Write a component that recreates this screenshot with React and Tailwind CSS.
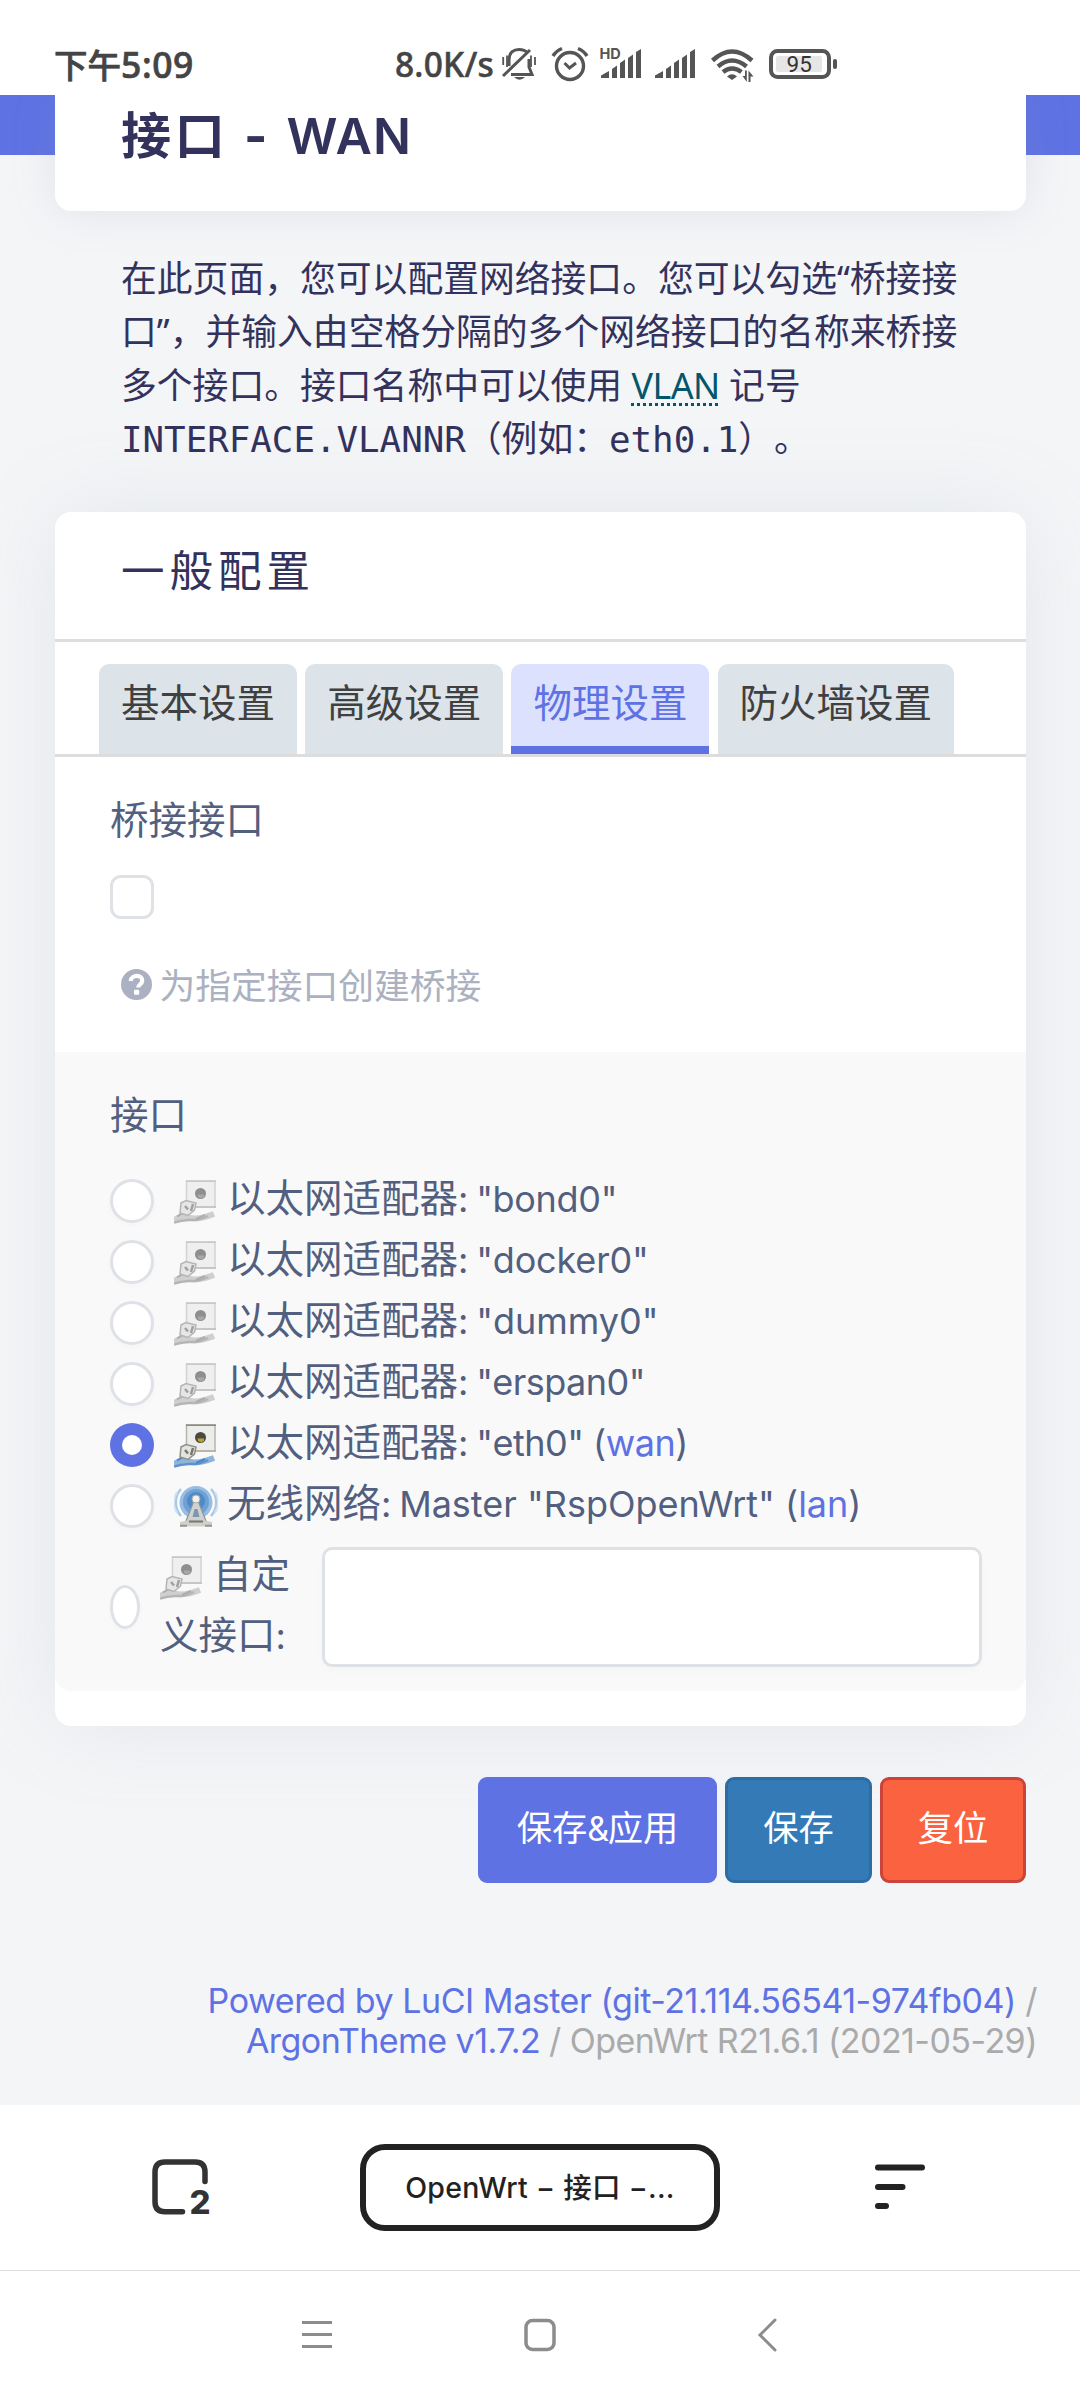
import React from "react";

const F = "font-['Inter','Noto_Sans_CJK_SC',sans-serif]";

function StatusBar() {
  return (
    <div className="relative z-10 h-[95px] w-full bg-white text-[#444444] flex items-start">
      <div className="ml-[54px] mt-[43px] w-[341px] h-[42px] leading-[42px] whitespace-nowrap font-medium text-[33.5px] [-webkit-text-stroke:0.7px] font-['Noto_Sans','Noto_Sans_CJK_SC',sans-serif]">
        下午<span className="text-[35.5px] tracking-[0.6px]">5:09</span>
      </div>
      <div className="mt-[43px] w-[105px] h-[42px] leading-[42px] whitespace-nowrap font-medium text-[33.5px] tracking-[0.2px] [-webkit-text-stroke:0.5px] font-['Noto_Sans',sans-serif]">8.0K/s</div>
      <svg className="mt-[40px]" width="340" height="50" viewBox="500 40 340 50" fill="none" stroke="#555" strokeWidth="3" strokeLinecap="butt">
        <path d="M530 50 L503 76" />
        <path d="M509 66 V60 C509 52 514 49.5 519 49.5 C523 49.5 526 51 528 53" />
        <path d="M529 59 V67 L532 74.5 H511" />
        <path d="M514 77 H525 Q519.5 82.500 514 77Z" fill="#555" stroke="none" />
        <path d="M503.200 57 V65 M507 55.500 V67 M531 55.500 V67 M535 57 V65" strokeWidth="1.800" />
        <circle cx="570" cy="66" r="13.500" strokeWidth="3.400" />
        <path d="M564.500 63 L569.500 68 L576 63" />
        <path d="M553 56 Q556 51 562 48.500 M578 48.500 Q584 51 587 56" strokeWidth="3.500" />
        <g fill="#555" stroke="none">
          {[601, 655].map((x) => (
            <g key={x}>
              <path d={`M${x} 78 V75.500 L${x + 8} 71 V78Z`} />
              <path d={`M${x + 11} 78 V69 L${x + 16} 65.500 V78Z`} />
              <path d={`M${x + 19} 78 V63 L${x + 24} 59.500 V78Z`} />
              <path d={`M${x + 27} 78 V58 L${x + 32} 54.500 V78Z`} />
              <path d={`M${x + 35} 78 V52 L${x + 40} 49 V78Z`} />
            </g>
          ))}
          <path d="M727 76.500 Q732 72 737 76.500 L732 80Z" />
          <path d="M742.500 76 H745 V70.500 H746.800 V82Z M748.500 70.500 L753.500 76.500 H750.500 V82 H748.500Z" />
        </g>
        <path d="M712.500 60.500 Q732 42.500 752 60.500" strokeWidth="4.500" />
        <path d="M718 66.500 Q732 54.500 746.500 66.500" strokeWidth="4.500" />
        <path d="M723 72 Q732 65 741.500 72" strokeWidth="4.500" />
        <rect x="776" y="56" width="46" height="16" rx="2" fill="#e6e6e6" stroke="none" />
        <rect x="771" y="51" width="58" height="26" rx="6.500" strokeWidth="4" />
        <rect x="833" y="59" width="4" height="10" rx="2" fill="#555" stroke="none" />
        <text x="599.500" y="58.500" fontSize="14.500" fontWeight="700" fill="#555" stroke="none" className="font-['Inter']">HD</text>
        <text x="786.500" y="72" fontSize="22.500" fill="#333" stroke="none" className="font-['Roboto']">95</text>
      </svg>
    </div>
  );
}

function Adapter({ active }) {
  return (
    <svg width="44" height="44" viewBox="0 0 44 44" className="shrink-0">
      <rect x="12.500" y="1" width="28.500" height="26" fill={active ? "#ececea" : "#efefef"} stroke={active ? "#b4b4b0" : "#d2d2d2"} strokeWidth="1.500" />
      <path d="M12 1.200 H42" stroke={active ? "#88887f" : "#c9c9c9"} strokeWidth="1.500" />
      <path d="M14 27 H42" stroke={active ? "#b5b5ad" : "#c6c6c6"} strokeWidth="2" />
      <circle cx="26.500" cy="13.500" r="5.500" fill={active ? "#4a4a40" : "#8e8e8e"} />
      <path d="M23.500 14.500 H30 V17 L27 18.500 L24 17Z" fill={active ? "#b9a32c" : "#a8a8a8"} />
      <path d="M0 40.500 Q7 34.500 15 37.500 T40 34" stroke={active ? "#8fb4dc" : "#cfcfcf"} strokeWidth="6" fill="none" />
      <path d="M0 42.500 Q9 39.500 17 40 T34 36" stroke={active ? "#5f92cc" : "#b5b5b5"} strokeWidth="2.500" fill="none" />
      <path d="M3 36.500 L9 33 M22 39 L31 35" stroke={active ? "#4f86c4" : "#adadad"} strokeWidth="2" />
      <path d="M7 23 L12 20.500 L22 23 L20.500 30 L14 35.500 L6 33Z" fill={active ? "#e3e3df" : "#e6e6e6"} stroke={active ? "#8f8f88" : "#b5b5b5"} strokeWidth="1.500" />
      <path d="M11 26 L14 29.500 M19 24 L17 31" stroke={active ? "#77776f" : "#a0a0a0"} strokeWidth="2.500" />
    </svg>
  );
}

function Wireless() {
  return (
    <svg width="44" height="44" viewBox="0 0 44 44" className="shrink-0">
      <path d="M7 31 A20 20 0 0 1 7 4 M37 31 A20 20 0 0 0 37 4" fill="none" stroke="#a9c8e8" strokeWidth="2.500" />
      <path d="M3 28 A20 20 0 0 1 3 7 M41 28 A20 20 0 0 0 41 7" fill="none" stroke="#d3e2f2" strokeWidth="2" />
      <circle cx="22" cy="17.500" r="16.500" fill="#98bde3" />
      <circle cx="22" cy="17" r="13" fill="#6fa1d4" />
      <circle cx="22" cy="16" r="9" fill="#4f8ac7" />
      <path d="M19.500 17 L12 36 H32 L24.500 17Z" fill="#cfd2d3" stroke="#8e9499" strokeWidth="1.200" />
      <path d="M20.500 24 L18.500 32 H25.500 L23.500 24Z" fill="#7f97ad" />
      <circle cx="22" cy="14" r="4" fill="#f1f1ee" stroke="#aaa" />
      <path d="M6 37 L13 35.500 L16 33 H28 L31 35.500 L38 37 V41.500 H6Z" fill="#d0d0ca" />
      <path d="M6 40.800 H13 M31 40.800 H38" stroke="#96968e" strokeWidth="2" />
      <path d="M15 36.500 H29" stroke="#77776f" strokeWidth="2" />
    </svg>
  );
}

function Radio({ checked, narrow }) {
  if (checked) {
    return (
      <span className="flex h-[44px] w-[44px] shrink-0 items-center justify-center rounded-full bg-[#5e72e4]">
        <span className="h-[20px] w-[20px] rounded-full bg-white" />
      </span>
    );
  }
  return <span className={`h-[44px] shrink-0 rounded-[50%] border-[3px] border-[#dee2e6] bg-white shadow-[0_3px_6px_rgba(50,50,93,0.02)] ${narrow ? "w-[30px]" : "w-[44px]"}`} />;
}

function InterfaceRow({ kind, name, link, sp, active }) {
  return (
    <div className="flex h-[61px] items-start">
      <div className="mt-[8px] flex">
        <Radio checked={active} />
      </div>
      <div className="ml-[20px] mt-[9px]">{kind === "wifi" ? <Wireless /> : <Adapter active={active} />}</div>
      <div className="ml-[9px] mt-[2px] h-[50px] leading-[50px] whitespace-nowrap">
        {kind === "wifi" ? "无线网络" : "以太网适配器"}
        <span className="text-[36px] tracking-[-1.2px]">: </span>
        <span className={`text-[36px] ${sp}`}>
          {name}
          {link && (
            <>
              {" ("}
              <span className="text-[#5e72e4]">{link}</span>)
            </>
          )}
        </span>
      </div>
    </div>
  );
}

const rows = [
  { name: '"bond0"', sp: "tracking-[-0.3px]" },
  { name: '"docker0"', sp: "tracking-[-0.15px]" },
  { name: '"dummy0"', sp: "tracking-[0px]" },
  { name: '"erspan0"', sp: "tracking-[-0.55px]" },
  { name: '"eth0"', sp: "tracking-[-0.5px]", link: "wan", active: true },
  { name: 'Master "RspOpenWrt"', sp: "tracking-[0px]", link: "lan", kind: "wifi" },
];

const tabs = ["基本设置", "高级设置", "物理设置", "防火墙设置"];

function Tab({ label, active }) {
  return (
    <div className={`h-[90px] rounded-t-[10px] px-[22px] pt-[14px] text-[38.500px] leading-[50px] whitespace-nowrap ${active ? "bg-[#dce1fe] text-[#5e72e4] border-b-8 border-[#5e72e4]" : "bg-[#dce3e9] text-[#404040]"}`}>
      {label}
    </div>
  );
}

function ConfigCard() {
  return (
    <section className="mx-[55px] mt-[42px] h-[1214px] w-[971px] rounded-[16px] bg-white shadow-[0_0_88px_rgba(136,152,170,0.15)]">
      <h3 className="h-[127px] pl-[66px] pt-[29px] text-[43.5px] leading-[60px] tracking-[5px] text-[#32325d]">一般配置</h3>
      <div className="h-[3px] bg-[#dddddd]" />
      <div className="flex h-[112px] items-end gap-[8.2px] pl-[44px]">
        {tabs.map((t, i) => (
          <Tab key={t} label={t} active={i === 2} />
        ))}
      </div>
      <div className="h-[3px] bg-[#dddddd]" />
      <div className="h-[295px] pl-[55px] pt-[38px] text-[#525f7f]">
        <div className="h-[50px] text-[38.500px] leading-[50px]">桥接接口</div>
        <div className="mt-[30px] h-[44px] w-[44px] rounded-[11px] border-[3px] border-[#dee2e6] bg-white" />
        <div className="ml-[11px] mt-[42px] flex h-[50px] items-center text-[#abb1c1]">
          <svg width="31" height="31" viewBox="0 0 31 31" className="mt-[-4px]">
            <circle cx="15.500" cy="15.500" r="15.500" fill="#abb0c2" />
            <path d="M9.600 12 C10.500 5 21.500 5.500 21.200 11.800 C21 15.500 17.200 15.500 17.200 18.600" fill="none" stroke="#fff" strokeWidth="4.200" />
            <rect x="13" y="20.800" width="5.200" height="5" rx="1" fill="#fff" />
          </svg>
          <span className="ml-[7.5px] text-[35.750px] leading-[50px]">为指定接口创建桥接</span>
        </div>
      </div>
      <div className="h-[639px] rounded-b-[16px] bg-[#f9f9f9] pl-[55px] pt-[38px] text-[38.500px] text-[#525f7f]">
        <div className="h-[50px] leading-[50px]">接口</div>
        <div className="mt-[31px]">
          {rows.map((r) => (
            <InterfaceRow key={r.name} {...r} />
          ))}
        </div>
        <div className="mt-[10px] flex h-[120px]">
          <div className="mt-[38px] flex">
            <Radio narrow />
          </div>
          <div className="ml-[20px] w-[162px]">
            <div className="-mt-[2px] flex h-[61px] items-center leading-[61px]">
              <div className="mt-[4px]"><Adapter /></div>
              <span className="-mt-[2px] ml-[9px] whitespace-nowrap">自定</span>
            </div>
            <div className="-mt-[1.5px] leading-[61px] whitespace-nowrap">义接口<span className="text-[36px]">:</span></div>
          </div>
          <div className="h-[120px] w-[660px] rounded-[10px] border-[3px] border-[#dee2e6] bg-white shadow-[0_3px_8px_rgba(50,50,93,0.02)]" />
        </div>
      </div>
    </section>
  );
}

function ActionButton({ children, className }) {
  return (
    <button className={`h-[106px] rounded-[9px] border-[3px] pb-[3px] text-[35.300px] leading-[50px] text-white whitespace-nowrap ${className}`}>
      {children}
    </button>
  );
}

export default function App() {
  return (
    <div className={`flex h-[2400px] w-[1080px] flex-col overflow-hidden bg-[#f4f5f7] [text-spacing-trim:space-all] ${F}`}>
      <StatusBar />
      <header className="h-[60px] bg-[#5e72e4] px-[55px]">
        <div className="h-[116px] w-[971px] rounded-b-[16px] bg-white pl-[66px] pt-[11px] shadow-[0_0_44px_rgba(136,152,170,0.18)]">
          <h2 className="text-[50px] font-bold leading-[60px] tracking-[3.7px] text-[#32325d] whitespace-nowrap">
            接口 - <span className="font-semibold tracking-[1.2px]">WAN</span>
          </h2>
        </div>
      </header>

      <p className="ml-[121px] mt-[97px] h-[218px] text-[35.800px] leading-[53.300px] text-[#32325d] whitespace-nowrap font-['Noto_Sans','Noto_Sans_CJK_SC',sans-serif]">
        在此页面，您可以配置网络接口。您可以勾选“桥接接
        <br />
        口”，并输入由空格分隔的多个网络接口的名称来桥接
        <br />
        多个接口。接口名称中可以使用 <abbr className="tracking-[-0.5px] text-[#05566a] underline decoration-dotted decoration-[3px] underline-offset-[4px]">VLAN</abbr> 记号
        <br />
        <span className="font-['DejaVu_Sans_Mono','Noto_Sans_CJK_SC',monospace]">INTERFACE.VLANNR（例如：eth0.1）。</span>
      </p>

      <ConfigCard />

      <div className="mr-[54px] mt-[51px] flex justify-end gap-[8px]">
        <ActionButton className="w-[239px] border-[#5e72e4] bg-[#5e72e4]">
          保存<span className="text-[34px] tracking-[-1.500px]">&amp;</span>应用
        </ActionButton>
        <ActionButton className="w-[147px] border-[#2e6da4] bg-[#337ab7]">保存</ActionButton>
        <ActionButton className="w-[146px] border-[#cb4339] bg-[#fb6340]">复位</ActionButton>
      </div>

      <footer className="mr-[43px] mt-[98px] h-[124px] text-right text-[34px] leading-[40px] text-[#aaaaaa] whitespace-nowrap">
        <div className="tracking-[-0.45px]">
          <span className="text-[#5e72e4]">Powered by LuCI Master (git-21.114.56541-974fb04)</span> /
        </div>
        <div className="tracking-[-0.55px]">
          <span className="text-[#5e72e4]">ArgonTheme v1.7.2</span> / OpenWrt R21.6.1 (2021-05-29)
        </div>
      </footer>

      <div className="flex h-[166px] shrink-0 items-start border-b border-[#dedede] bg-white">
        <svg className="ml-[150px] mt-[50px]" width="72" height="74" viewBox="150 2155 72 74">
          <path d="M182.500 2211.800 H165 Q155 2211.800 155 2201.800 V2172 Q155 2162 165 2162 H195 Q205 2162 205 2172 V2181.500" fill="none" stroke="#333" strokeWidth="5.500" strokeLinecap="round" />
          <text x="189.500" y="2214" fontSize="33" fontWeight="800" fill="#333" className="font-['Inter']">2</text>
        </svg>
        <div className="ml-[138px] mt-[39px] flex h-[87px] w-[360px] items-center justify-center rounded-[25px] border-[6px] border-[#222] pt-[2px]">
          <span className="text-[28.5px] font-medium tracking-[0.3px] text-[#222] whitespace-nowrap">OpenWrt − 接口 −...</span>
        </div>
        <svg className="ml-[153px] mt-[57px]" width="56" height="52" viewBox="873 2162 56 52" stroke="#222" strokeWidth="6" strokeLinecap="round">
          <path d="M878 2167.500 H922 M878 2187 H902.500 M878 2206 H886" />
        </svg>
      </div>

      <nav className="h-[129px] bg-white">
        <svg width="1080" height="129" viewBox="0 2271 1080 129" fill="none" stroke="#8c8c8c" strokeWidth="3">
          <path d="M302 2322.500 H332 M302 2334.500 H332 M302 2346.500 H332" />
          <rect x="526" y="2320.500" width="28" height="29" rx="6.500" strokeWidth="3.500" />
          <path d="M775 2320 L760 2335 L775 2350" strokeLinecap="round" />
        </svg>
      </nav>
    </div>
  );
}
